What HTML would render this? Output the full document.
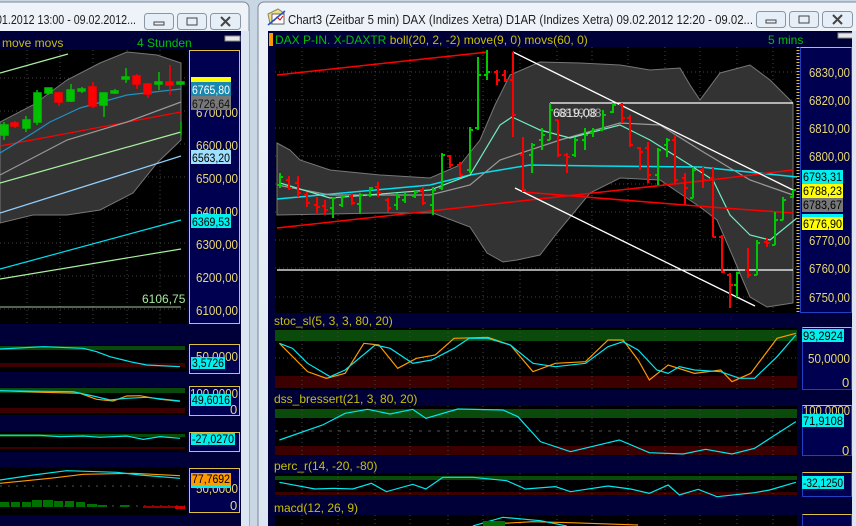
<!DOCTYPE html>
<html><head><meta charset="utf-8"><style>
html,body{margin:0;padding:0;width:856px;height:526px;overflow:hidden;background:#d5e1ee}
svg{display:block}
text{font-family:"Liberation Sans",sans-serif}
</style></head><body>
<svg width="856" height="526" viewBox="0 0 856 526" xmlns="http://www.w3.org/2000/svg">
<defs>
<linearGradient id="tb" x1="0" y1="0" x2="0" y2="1"><stop offset="0" stop-color="#eef3f9"/><stop offset="1" stop-color="#dbe6f2"/></linearGradient>
</defs>
<rect x="0" y="0" width="856" height="526" fill="#c9d6e4"/>
<!-- left window -->
<rect x="-10" y="2" width="259" height="540" rx="6" fill="url(#tb)" stroke="#7a8796"/>
<text x="-4" y="24" font-size="13" fill="#1e1e1e" textLength="140" lengthAdjust="spacingAndGlyphs">01.2012 13:00 - 09.02.2012...</text>
<g stroke="#8a96a4" fill="#e6eef7">
<rect x="144.5" y="13.5" width="29" height="16" rx="3"/><rect x="177.5" y="13.5" width="29" height="16" rx="3"/><rect x="210.5" y="13.5" width="30" height="16" rx="3"/>
</g>
<rect x="154" y="22" width="10" height="3" fill="none" stroke="#444"/>
<rect x="187" y="18" width="10" height="7" fill="none" stroke="#444"/>
<path d="M221 17L230 26M230 17L221 26" stroke="#444" stroke-width="2"/>
<rect x="0" y="31" width="241" height="495" fill="#000038"/>
<text x="2" y="47" font-size="12" fill="#c8c000">move movs</text>
<text x="137" y="47" font-size="12" fill="#00c000">4 Stunden</text>
<rect x="225" y="36" width="15" height="5" fill="#e8e8e8" stroke="#888"/>
<rect x="0" y="50" width="187" height="274" fill="#000"/>
<g stroke="#444" stroke-dasharray="1,3">
<path d="M27 50V324M60 50V324M93 50V324M127 50V324M160 50V324M0 78H187M0 111H187M0 144H187M0 177H187M0 210H187M0 243H187M0 276H187M0 309H187"/>
</g>
<polygon points="0,122 33,105 67,80 100,63 127,52 157,55 181,63 181,140 157,163 133,193 100,210 67,215 33,215 0,223" fill="#333" stroke="#777"/>
<g fill="none" stroke-width="1.2">
<polyline points="0,73 68,54" stroke="#a8f0a0"/>
<polyline points="0,146 181,112" stroke="#f00"/>
<polyline points="0,175 67,140 127,122 181,102" stroke="#999"/>
<polyline points="0,153 33,133 50,122 80,108 127,95 181,89" stroke="#2090c0"/>
<polyline points="0,183 181,132" stroke="#a8f0a0"/>
<polyline points="0,213 181,156" stroke="#90d0ff"/>
<polyline points="0,269 181,220" stroke="#00e0f0"/>
<polyline points="0,279 181,249" stroke="#a8f0a0"/>
<polyline points="0,307 181,307" stroke="#80a080"/>
</g>
<g stroke-width="1.5">
<g stroke="#00c000" fill="#00c000">
<path d="M4 122V140M26 116V132M37 90V125M48 88V95M71 84V102M82 87V93M104 93V117M115 89V94M126 68V83M159 72V90M181 122V135"/>
<rect x="1" y="125" width="7" height="10"/><rect x="23" y="120" width="7" height="8"/><rect x="34" y="93" width="7" height="29"/><rect x="45" y="88" width="7" height="5"/><rect x="67" y="90" width="7" height="11"/><rect x="78" y="89" width="7" height="2"/><rect x="100" y="93" width="7" height="12"/><rect x="111" y="91" width="7" height="2"/><rect x="122" y="77" width="7" height="2"/><rect x="155" y="82" width="7" height="2"/><rect x="177" y="82" width="7" height="2"/>
</g>
<g stroke="#f00" fill="#f00">
<path d="M15 121V128M59 92V106M93 82V108M137 74V89M148 83V98M170 65V95"/>
<rect x="11" y="123" width="7" height="3"/><rect x="55" y="93" width="7" height="9"/><rect x="89" y="87" width="7" height="19"/><rect x="133" y="76" width="7" height="8"/><rect x="144" y="84" width="7" height="10"/><rect x="166" y="82" width="7" height="3"/>
</g>
</g>
<text x="142" y="303" font-size="12" fill="#a8e8a0">6106,75</text>
<rect x="189.5" y="50.5" width="50" height="273" fill="#000050" stroke="#e0c040"/>
<g font-size="13" fill="#e8d870">
<text x="196" y="117" textLength="42" lengthAdjust="spacingAndGlyphs">6700,00</text><text x="196" y="150" textLength="42" lengthAdjust="spacingAndGlyphs">6600,00</text><text x="196" y="183" textLength="42" lengthAdjust="spacingAndGlyphs">6500,00</text><text x="196" y="216" textLength="42" lengthAdjust="spacingAndGlyphs">6400,00</text><text x="196" y="249" textLength="42" lengthAdjust="spacingAndGlyphs">6300,00</text><text x="196" y="282" textLength="42" lengthAdjust="spacingAndGlyphs">6200,00</text><text x="196" y="315" textLength="42" lengthAdjust="spacingAndGlyphs">6100,00</text>
</g>
<rect x="191" y="77" width="40" height="6" fill="#ffff00"/>
<rect x="191" y="82" width="40" height="14" fill="#1888b0"/><text x="192" y="94" font-size="12" fill="#fff" textLength="38" lengthAdjust="spacingAndGlyphs">6765,80</text>
<rect x="191" y="96" width="40" height="14" fill="#777"/><text x="192" y="108" font-size="12" fill="#111" textLength="38" lengthAdjust="spacingAndGlyphs">6726,64</text>
<rect x="191" y="150" width="40" height="14" fill="#a0e0ff"/><text x="192" y="162" font-size="12" fill="#000" textLength="38" lengthAdjust="spacingAndGlyphs">6563,20</text>
<rect x="191" y="214" width="40" height="14" fill="#00f0f0"/><text x="192" y="226" font-size="12" fill="#000" textLength="38" lengthAdjust="spacingAndGlyphs">6369,53</text>
<rect x="0" y="345" width="187" height="27" fill="#000"/>
<rect x="0" y="346" width="185" height="4" fill="#0a4a0a"/><rect x="0" y="363" width="185" height="4" fill="#3c0000"/>
<rect x="0" y="387" width="187" height="28" fill="#000"/>
<rect x="0" y="388" width="185" height="5" fill="#0a4a0a"/><rect x="0" y="408" width="185" height="5" fill="#3c0000"/>
<rect x="0" y="432" width="187" height="20" fill="#000"/>
<rect x="0" y="434" width="185" height="3" fill="#0a4a0a"/><rect x="0" y="447" width="185" height="2" fill="#3c0000"/>
<rect x="0" y="467" width="187" height="48" fill="#000"/>
<g transform="translate(0,310) scale(0.33333)" fill="none">
<polyline vector-effect="non-scaling-stroke" stroke-width="1.2" stroke="#00e8f0" points="0,117 130,110 250,115 290,125 330,140 390,155 440,165 540,170"/>
<polyline vector-effect="non-scaling-stroke" stroke-width="1.2" stroke="#ff9900" points="0,242 130,247 240,250 290,268 340,273 380,258 420,257 480,268 540,274"/>
<polyline vector-effect="non-scaling-stroke" stroke-width="1.2" stroke="#00e8f0" points="0,242 220,245 280,258 330,270 380,265 440,262 540,273"/>
<polyline vector-effect="non-scaling-stroke" stroke-width="1.2" stroke="#00e8f0" points="0,376 120,376 180,380 250,378 300,382 380,378 430,388 480,380 540,385"/>
<polyline vector-effect="non-scaling-stroke" stroke-width="1.2" stroke="#ff9900" points="0,520 150,505 250,493 400,490 540,497"/>
<polyline vector-effect="non-scaling-stroke" stroke-width="1.2" stroke="#00e8f0" points="0,510 100,495 200,482 350,487 420,495 540,505"/>
<path vector-effect="non-scaling-stroke" stroke="#555" stroke-dasharray="2,6" d="M0 528H555M0 588H555"/>
</g>
<g fill="#007000">
<rect x="0" y="502" width="9" height="5"/><rect x="11" y="502" width="9" height="5"/><rect x="22" y="502" width="9" height="5"/><rect x="32" y="500" width="10" height="7"/><rect x="43" y="500" width="10" height="7"/><rect x="54" y="501" width="9" height="6"/><rect x="65" y="501" width="9" height="6"/><rect x="76" y="502" width="9" height="5"/><rect x="87" y="504" width="10" height="3"/><rect x="98" y="505" width="9" height="2"/><rect x="120" y="505" width="9" height="2"/>
</g>
<rect x="143" y="506" width="40" height="2" fill="#900"/><rect x="175" y="506" width="10" height="3" fill="#c00"/>
<g fill="#000050" stroke="#e0c040">
<rect x="189.5" y="344.5" width="50" height="29"/><rect x="189.5" y="386.5" width="50" height="29"/><rect x="189.5" y="432.5" width="50" height="19"/><rect x="189.5" y="468.5" width="50" height="44"/>
</g>
<g font-size="13" fill="#e8d870">
<text x="196" y="361" textLength="42" lengthAdjust="spacingAndGlyphs">50,0000</text><text x="190" y="398" textLength="48" lengthAdjust="spacingAndGlyphs">100,0000</text><text x="230" y="414">0</text><text x="196" y="493" textLength="42" lengthAdjust="spacingAndGlyphs">50,0000</text><text x="230" y="510">0</text>
</g>
<rect x="191" y="357" width="34" height="12" fill="#00f0f0"/><text x="192" y="367" font-size="12" fill="#000" textLength="32" lengthAdjust="spacingAndGlyphs">3,5726</text>
<rect x="191" y="394" width="40" height="12" fill="#00f0f0"/><text x="192" y="404" font-size="12" fill="#000" textLength="38" lengthAdjust="spacingAndGlyphs">49,6016</text>
<rect x="191" y="433" width="44" height="12" fill="#00f0f0"/><text x="192" y="443" font-size="12" fill="#000" textLength="42" lengthAdjust="spacingAndGlyphs">-27,0270</text>
<rect x="191" y="473" width="40" height="12" fill="#ff9900"/><rect x="191" y="485" width="40" height="3" fill="#00f0f0"/><text x="192" y="483" font-size="12" fill="#000" textLength="38" lengthAdjust="spacingAndGlyphs">77,7692</text>
<rect x="241" y="31" width="8" height="495" fill="#dce7f3"/>

<!-- right window -->
<rect x="258" y="2" width="610" height="540" rx="6" fill="url(#tb)" stroke="#7a8796"/>
<g>
<path d="M268 14L278 9L284 13L283 24L270 24Z" fill="#f0e080" stroke="#886"/>
<rect x="272" y="14" width="12" height="10" fill="#fff" stroke="#444" stroke-width="0.8"/>
<path d="M274 21L277 17L280 20L283 16" stroke="#c00" fill="none"/>
<path d="M268 25L285 11" stroke="#2050d0" stroke-width="1.5"/>
</g>
<text x="288" y="24" font-size="12.5" fill="#1e1e1e" textLength="465" lengthAdjust="spacingAndGlyphs">Chart3 (Zeitbar 5 min)  DAX (Indizes Xetra) D1AR (Indizes Xetra) 09.02.2012 12:20 - 09.02...</text>
<g stroke="#8a96a4" fill="#e6eef7">
<rect x="756.5" y="11.5" width="29" height="16" rx="3"/><rect x="789.5" y="11.5" width="29" height="16" rx="3"/><rect x="822.5" y="11.5" width="30" height="16" rx="3"/>
</g>
<rect x="766" y="20" width="10" height="3" fill="none" stroke="#444"/>
<rect x="799" y="16" width="10" height="7" fill="none" stroke="#444"/>
<path d="M833 15L842 24M842 15L833 24" stroke="#444" stroke-width="2"/>
<rect x="268" y="31" width="588" height="495" fill="#000038"/>
<rect x="269" y="33" width="4" height="13" fill="#ff9900"/>
<text x="275" y="44" font-size="12" fill="#00c000">DAX P-IN. X-DAXTR <tspan fill="#c8c000">boll(20, 2, -2) move(9, 0) movs(60, 0)</tspan></text>
<text x="768" y="44" font-size="12" fill="#00c000">5 mins</text>
<rect x="838" y="33" width="15" height="5" fill="#e8e8e8" stroke="#888"/>
<rect x="275" y="47" width="522" height="266" fill="#000"/>
<g stroke="#444" stroke-dasharray="1,3">
<path d="M302 47V313M338 47V313M375 47V313M410 47V313M448 47V313M483 47V313M520 47V313M557 47V313M592 47V313M628 47V313M665 47V313M700 47V313M737 47V313M773 47V313M275 72H797M275 100H797M275 128H797M275 156H797M275 184H797M275 212H797M275 240H797M275 268H797M275 297H797"/>
</g>
<polygon points="277,143 290,150 300,160 330,170 380,175 430,178 460,165 480,140 495,105 510,75 540,62 580,63 620,65 650,70 680,68 690,85 700,100 720,73 750,65 770,80 793,103 793,303 780,305 767,307 750,297 733,257 717,220 700,207 660,180 620,178 590,193 557,233 540,255 517,260 503,262 487,253 470,227 433,213 380,213 330,214 277,215" fill="#333" stroke="#777"/>
<g fill="none" stroke-width="1.2">
<polyline points="277,199 430,185 470,175 530,165 600,166 700,167 797,177" stroke="#00e0f0" stroke-width="1.5"/>
<polyline points="277,185 330,195 430,195 470,185 500,160 560,140 620,123 660,125 700,150 750,180 793,195" stroke="#999"/>
<polyline points="280,183 330,198 430,190 470,175 500,125 512,117 540,130 570,138 620,125 650,140 690,165 713,180 730,215 750,235 770,240 797,218" stroke="#70f0c0"/>
<path d="M277 75L488 52M277 228L710 180L793 170M523 192L710 207L793 213" stroke="#f00" stroke-width="1.5"/>
<path d="M513 52L793 190M515 188L755 306M550 103H793M277 270H793" stroke="#fff" stroke-width="1.3"/>
</g>
<g fill="none" stroke-width="2">
<path stroke="#00c800" d="M280 173V188M277 185H280M280 177H283M333 197V218M330 208H333M333 198H336M342 195V207M339 205H342M342 197H345M360 193V213M357 204H360M360 195H363M370 187V197M367 195H370M370 188H373M397 193V210M394 205H397M397 197H400M405 193V203M402 200H405M405 195H408M415 190V198M412 196H415M415 192H418M433 187V215M430 205H433M433 190H436M442 153V190M439 188H442M442 155H445M470 127V173M467 170H470M470 130H473M478 57V130M475 128H478M478 75H481M487 50V80M484 75H487M487 72H490M532 143V173M529 155H532M532 145H535M542 128V150M539 140H542M542 135H545M550 103V140M547 140H550M550 110H553M575 137V157M572 155H575M575 140H578M585 128V150M582 140H585M585 135H588M593 128V137M590 133H593M593 130H596M603 110V130M600 130H603M603 115H606M613 103V113M610 112H613M613 105H616M658 148V185M655 175H658M658 150H661M667 138V157M664 145H667M667 140H670M693 167V198M690 198H693M693 170H696M737 272V297M734 285H737M737 273H740M757 240V275M754 275H757M757 243H760M775 212V245M772 245H775M775 220H778M783 197V220M780 220H783M783 200H786M793 190V198M790 197H793M793 190H796"/>
<path stroke="#f00" d="M289 176V190M286 180H289M289 188H292M298 176V197M295 183H298M298 193H301M307 192V207M304 195H307M307 203H310M317 197V213M314 205H317M317 207H320M325 200V215M322 206H325M325 210H328M352 193V205M349 196H352M352 203H355M378 182V197M375 187H378M378 193H381M388 198V212M385 200H388M388 208H391M423 187V205M420 190H423M423 203H426M450 155V168M447 156H450M450 165H453M460 162V177M457 165H460M460 175H463M497 70V85M494 72H497M497 80H500M505 70V82M502 75H505M505 80H508M513 52V137M510 80H513M513 115H516M523 137V192M520 155H523M523 190H526M558 120V157M555 120H558M558 155H561M567 153V173M564 155H567M567 157H570M622 103V123M619 105H622M622 118H625M630 115V147M627 118H630M630 145H633M640 147V170M637 148H640M640 152H643M648 142V183M645 148H648M648 175H651M675 135V183M672 140H675M675 180H678M685 173V205M682 178H685M685 188H688M703 167V188M700 170H703M703 180H706M713 168V237M710 178H713M713 237H716M722 235V273M719 237H722M722 272H725M730 273V308M727 275H730M730 285H733M748 248V278M745 270H748M748 275H751M767 238V247M764 242H767M767 243H770"/>
</g>
<text x="553" y="117" font-size="12" fill="#e8e8e8">6819,08</text>
<text x="558" y="117" font-size="12" fill="#e8e8e8" opacity="0.6">6819,08</text>
<path d="M798 47V313" stroke="#e0c040" stroke-dasharray="1,2" stroke-width="3"/>
<rect x="800.5" y="47.5" width="51" height="265" fill="#000050" stroke="#2040c0"/>
<path d="M800.5 47.5H851.5" stroke="#e0c040"/>
<g font-size="13" fill="#e8d870">
<text x="809" y="77" textLength="41" lengthAdjust="spacingAndGlyphs">6830,00</text><text x="809" y="105" textLength="41" lengthAdjust="spacingAndGlyphs">6820,00</text><text x="809" y="133" textLength="41" lengthAdjust="spacingAndGlyphs">6810,00</text><text x="809" y="161" textLength="41" lengthAdjust="spacingAndGlyphs">6800,00</text><text x="809" y="245" textLength="41" lengthAdjust="spacingAndGlyphs">6770,00</text><text x="809" y="273" textLength="41" lengthAdjust="spacingAndGlyphs">6760,00</text><text x="809" y="302" textLength="41" lengthAdjust="spacingAndGlyphs">6750,00</text>
</g>
<rect x="802" y="170" width="41" height="14" fill="#00f0f0"/><text x="803" y="181" font-size="12" fill="#000" textLength="39" lengthAdjust="spacingAndGlyphs">6793,31</text>
<rect x="802" y="184" width="41" height="14" fill="#ffff00"/><text x="803" y="195" font-size="12" fill="#000" textLength="39" lengthAdjust="spacingAndGlyphs">6788,23</text>
<rect x="802" y="198" width="41" height="14" fill="#777"/><text x="803" y="209" font-size="12" fill="#000" textLength="39" lengthAdjust="spacingAndGlyphs">6783,67</text>
<rect x="802" y="214" width="41" height="3" fill="#00f0f0"/>
<rect x="802" y="217" width="41" height="13" fill="#ffff00"/><text x="803" y="228" font-size="12" fill="#000" textLength="39" lengthAdjust="spacingAndGlyphs">6776,90</text>
<g font-size="12" fill="#c8c000">
<text x="274" y="325">stoc_sl(5, 3, 3, 80, 20)</text>
<text x="274" y="403">dss_bressert(21, 3, 80, 20)</text>
<text x="274" y="470">perc_r(14, -20, -80)</text>
<text x="274" y="512">macd(12, 26, 9)</text>
</g>
<rect x="275" y="328" width="522" height="62" fill="#000"/>
<rect x="275" y="330" width="522" height="11" fill="#0a4a0a"/><rect x="275" y="376" width="522" height="12" fill="#3c0000"/>
<rect x="275" y="406" width="522" height="50" fill="#000"/>
<rect x="275" y="409" width="522" height="9" fill="#0a4a0a"/><rect x="275" y="446" width="522" height="9" fill="#3c0000"/>
<rect x="275" y="473" width="522" height="23" fill="#000"/>
<rect x="275" y="476" width="522" height="4" fill="#0a4a0a"/><rect x="275" y="492" width="522" height="3" fill="#3c0000"/>
<rect x="275" y="515" width="522" height="11" fill="#000"/>
<g stroke="#444" stroke-dasharray="1,3">
<path d="M302 328V390M338 328V390M375 328V390M410 328V390M448 328V390M483 328V390M520 328V390M557 328V390M592 328V390M628 328V390M665 328V390M700 328V390M737 328V390M773 328V390M275 358H797M302 406V456M338 406V456M375 406V456M410 406V456M448 406V456M483 406V456M520 406V456M557 406V456M592 406V456M628 406V456M665 406V456M700 406V456M737 406V456M773 406V456M302 473V496M338 473V496M375 473V496M410 473V496M448 473V496M483 473V496M520 473V496M557 473V496M592 473V496M628 473V496M665 473V496M700 473V496M737 473V496M773 473V496M302 515V526M338 515V526M375 515V526M410 515V526M448 515V526M483 515V526M520 515V526M557 515V526M592 515V526M628 515V526M665 515V526M700 515V526M737 515V526M773 515V526"/>
</g>
<path d="M275 431H797" stroke="#555" stroke-dasharray="3,6"/>
<g transform="translate(270,310) scale(0.3756,0.33333)" fill="none">
<polyline vector-effect="non-scaling-stroke" stroke="#ff9900" stroke-width="1.2" points="25,100 100,185 150,205 200,190 250,100 290,105 340,175 390,145 440,135 490,85 580,82 640,105 700,185 760,160 840,155 900,90 940,90 980,150 1010,210 1060,165 1130,190 1200,180 1230,215 1280,190 1350,85 1400,70"/>
<polyline vector-effect="non-scaling-stroke" stroke="#00e8f0" stroke-width="1.2" points="25,100 60,115 100,160 160,200 200,180 280,105 320,115 380,160 430,150 490,115 530,85 580,85 640,105 700,160 760,170 840,160 900,110 940,95 980,120 1030,180 1060,190 1090,170 1130,180 1200,185 1250,205 1290,205 1350,140 1400,75"/>
<polyline vector-effect="non-scaling-stroke" stroke="#00e8f0" stroke-width="1.2" points="25,390 140,345 200,310 260,298 320,312 380,298 415,325 500,297 620,300 660,320 720,395 800,425 930,390 1010,428 1100,432 1160,418 1230,432 1290,415 1400,335"/>
<polyline vector-effect="non-scaling-stroke" stroke="#00e8f0" stroke-width="1.2" points="25,517 120,537 170,535 220,537 270,520 310,545 380,523 415,537 460,502 540,502 630,512 680,537 760,530 800,545 900,528 960,537 1010,550 1060,525 1090,555 1140,538 1190,560 1290,548 1330,540 1400,517"/>
<polyline vector-effect="non-scaling-stroke" stroke="#ff9900" stroke-width="1.2" points="620,640 700,635 800,638 980,645"/>
<polyline vector-effect="non-scaling-stroke" stroke="#00e8f0" stroke-width="1.2" points="540,648 620,622 720,632 790,648"/>
</g>
<rect x="483" y="521" width="22" height="5" fill="#007000"/>
<g fill="#000050" stroke="#2040c0">
<rect x="802.5" y="327.5" width="49" height="62"/><rect x="802.5" y="405.5" width="49" height="50"/><rect x="802.5" y="472.5" width="49" height="24"/><rect x="802.5" y="514.5" width="49" height="15"/>
</g>
<path d="M802.5 327.5H851.5M802.5 405.5H851.5M802.5 472.5H851.5M802.5 514.5H851.5" stroke="#e0c040"/>
<g font-size="13" fill="#e8d870">
<text x="808" y="363" textLength="42" lengthAdjust="spacingAndGlyphs">50,0000</text><text x="842" y="387">0</text><text x="803" y="415" textLength="47" lengthAdjust="spacingAndGlyphs">100,0000</text><text x="842" y="455">0</text>
</g>
<rect x="802" y="329" width="42" height="13" fill="#00f0f0"/><text x="803" y="340" font-size="12" fill="#000" textLength="40" lengthAdjust="spacingAndGlyphs">93,2924</text>
<rect x="802" y="414" width="42" height="13" fill="#00f0f0"/><text x="803" y="425" font-size="12" fill="#000" textLength="40" lengthAdjust="spacingAndGlyphs">71,9108</text>
<rect x="802" y="476" width="42" height="13" fill="#00f0f0"/><text x="803" y="487" font-size="12" fill="#000" textLength="40" lengthAdjust="spacingAndGlyphs">-32,1250</text>
<rect x="852" y="31" width="4" height="495" fill="#dce7f3"/>
</svg>
</body></html>
